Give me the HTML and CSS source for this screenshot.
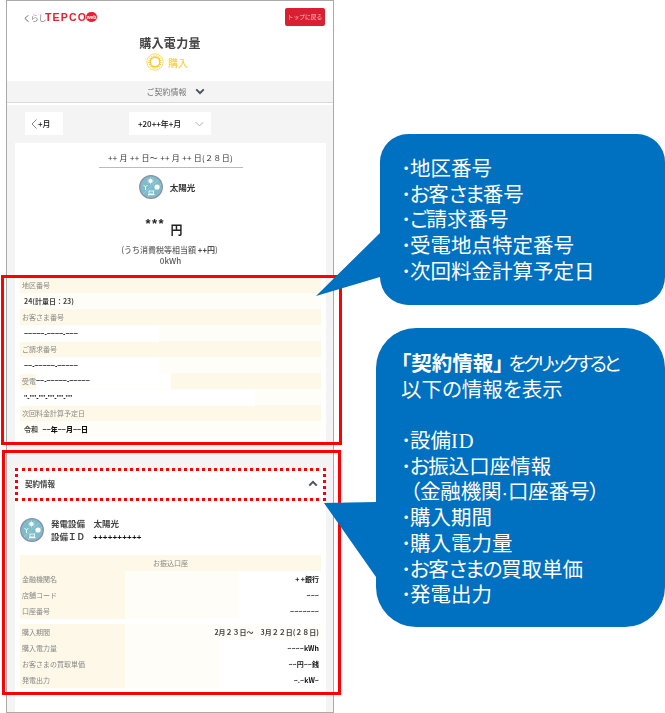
FILE: index.html
```html
<!DOCTYPE html>
<html lang="ja">
<head>
<meta charset="utf-8">
<title>購入電力量</title>
<link rel="stylesheet" href="styles.css">
</head>
<body>
<div class="stage">
  <div class="phone">
    <header class="head">
      <div class="topbar">
        <div class="logo"><span class="logo-k">くらし</span><span class="logo-t">TEPCO</span><span class="logo-w">web</span></div>
        <button class="top-btn">トップに戻る</button>
      </div>
      <h1 class="title">購入電力量</h1>
      <div class="kind">
        <svg class="sun" viewBox="0 0 18 18"><circle cx="9" cy="9" r="8.2" fill="none" stroke="#fbd75b" stroke-width=".9"/><circle cx="9" cy="9" r="4.8" fill="none" stroke="#f9c92e" stroke-width="1.5"/><circle cx="9" cy="9" r="6.1" fill="none" stroke="#f9c92e" stroke-width="1.2" stroke-dasharray="1 1.2"/></svg>
        <span>購入</span>
      </div>
    </header>
    <div class="infobar"><span>ご契約情報</span><svg class="chev" viewBox="0 0 12 8"><path d="M1.5 1.5 6 6l4.5-4.5" fill="none" stroke="#4a5160" stroke-width="2.4"/></svg></div>
    <div class="gap"></div>
    <main class="main">
      <div class="selectors">
        <div class="sel sel-prev"><svg class="lt" viewBox="0 0 6 10"><path d="M5.5.5 1 5l4.5 4.5" fill="none" stroke="#777" stroke-width=".9"/></svg><b>+月</b></div>
        <div class="sel sel-month"><b>+20++年+月</b><svg class="down" viewBox="0 0 12 7"><path d="M1 1l5 5 5-5" fill="none" stroke="#9a9a9a" stroke-width="1"/></svg></div>
      </div>
      <section class="card card-a">
        <div class="period">++ 月 ++ 日〜 ++ 月 ++ 日(２８日)</div>
        <div class="kindrow">
          <svg class="solar" viewBox="0 0 24 24"><use href="#solar-icon"/></svg>
          <b>太陽光</b>
        </div>
        <div class="amount"><span class="stars">***</span><span class="yen">円</span></div>
        <div class="tax">(うち消費税等相当額 <b>++円</b>)</div>
        <div class="kwh">0kWh</div>
        <dl class="rows">
          <dt>地区番号</dt><dd class="strong">24(計量日：23)</dd>
          <dt>お客さま番号</dt><dd><span class="mask w-a">~~~~~-~~~~-~~~</span></dd>
          <dt>ご請求番号</dt><dd><span class="mask w-a">~~-~~~~~-~~~~~</span></dd>
          <dt class="cut">受電<span class="mask w-b">~~-~~~~~-~~~~~</span></dt><dd><span class="mask w-c">''-''''-''''-''''-''''-''''</span></dd>
          <dt>次回料金計算予定日</dt><dd class="strong">令和 <b class="spaced">~~年~~月~~日</b></dd>
        </dl>
      </section>
      <section class="card card-b">
        <div class="accordion"><b>契約情報</b><svg class="chev up" viewBox="0 0 12 8"><path d="M1.5 6.5 6 2l4.5 4.5" fill="none" stroke="#4a5160" stroke-width="2.4"/></svg></div>
        <div class="equip">
          <svg class="solar" viewBox="0 0 24 24"><use href="#solar-icon"/></svg>
          <div class="equip-text">
            <div>発電設備　太陽光</div>
            <div>設備ＩＤ<span class="plus">++++++++++</span></div>
          </div>
        </div>
        <div class="tbl tbl-first">
          <div class="tbl-head">お振込口座</div>
          <div class="tr"><span>金融機関名</span><b>+ +銀行</b></div>
          <div class="tr"><span>店舗コード</span><b>~~~</b></div>
          <div class="tr"><span>口座番号</span><b>~~~~~~~</b></div>
        </div>
        <div class="tbl tbl-second">
          <div class="tr"><span>購入期間</span><b class="grey">2月２３日〜　3月２２日(２８日)</b></div>
          <div class="tr"><span>購入電力量</span><b>~~~~kWh</b></div>
          <div class="tr"><span>お客さまの買取単価</span><b>~~円~~銭</b></div>
          <div class="tr"><span>発電出力</span><b>~.~kW~</b></div>
        </div>
      </section>
    </main>
  </div>

  <svg class="defs" width="0" height="0">
    <symbol id="solar-icon" viewBox="0 0 24 24">
      <circle cx="12" cy="12" r="11.3" fill="#7dbccb" stroke="#8d90a3" stroke-width="1.3"/>
      <path d="M4 19 19 5M8 22 22 9" stroke="#a5d3dd" stroke-width=".7"/>
      <circle cx="11.5" cy="6" r="2" fill="#fff"/>
      <path d="M11.5 2.5v7M8 6h7M9 3.5l5 5M14 3.5l-5 5" stroke="#fff" stroke-width=".5"/>
      <circle cx="18" cy="12" r="2.6" fill="#fff"/>
      <path d="M4.5 10 6.5 12 8.5 10M6.5 12v3" fill="none" stroke="#fff" stroke-width=".9"/>
      <rect x="10" y="16" width="4.5" height="3" fill="none" stroke="#fff" stroke-width=".8"/>
      <rect x="9" y="19" width="6.5" height="1.2" fill="#fff"/>
    </symbol>
  </svg>

  <div class="redbox box-a"></div>
  <div class="redbox box-b"></div>
  <div class="dotbox"></div>

  <svg class="bubbles" viewBox="0 0 665 713">
    <path fill="#0070c0" d="M408 134H637a28 28 0 0 1 28 28V277a28 28 0 0 1-28 28H408a28 28 0 0 1-28-28V277L316 296 380 233V162a28 28 0 0 1 28-28Z"/>
    <path fill="#0070c0" d="M416 328H625a40 40 0 0 1 40 40V587a40 40 0 0 1-40 40H416a40 40 0 0 1-40-40V577L324 503 376 502V368a40 40 0 0 1 40-40Z"/>
  </svg>
  <div class="bubble-text bt-a">
    <div><span class="dot">･</span>地区番号</div>
    <div><span class="dot">･</span><span class="k">お</span>客<span class="k">さま</span>番号</div>
    <div><span class="dot">･</span><span class="k">ご</span>請求番号</div>
    <div><span class="dot">･</span>受電地点特定番号</div>
    <div><span class="dot">･</span>次回料金計算予定日</div>
  </div>
  <div class="bubble-text bt-b">
    <div><b>「契約情報」</b><span class="kk">をクリックすると</span></div>
    <div>以下の情報を表示</div>
    <div>&nbsp;</div>
    <div><span class="dot">･</span>設備<span class="latin">ID</span></div>
    <div><span class="dot">･</span><span class="k">お</span>振込口座情報</div>
    <div class="indent">（金融機関<span class="mid">･</span>口座番号）</div>
    <div><span class="dot">･</span>購入期間</div>
    <div><span class="dot">･</span>購入電力量</div>
    <div><span class="dot">･</span><span class="k">お</span>客<span class="k">さまの</span>買取単価</div>
    <div><span class="dot">･</span>発電出力</div>
  </div>
</div>
</body>
</html>
```

FILE: styles.css
```css
* { box-sizing: border-box; }
html, body { margin: 0; padding: 0; background: #fff; }
body { font-family: "Noto Sans CJK JP", "Liberation Sans", sans-serif; color: #444; }
.stage { position: relative; width: 665px; height: 713px; overflow: hidden; }
.phone { margin-left: 6px; width: 328px; height: 713px; border: 1px solid #aaa; display: flex; flex-direction: column; background: #fff; filter: blur(.3px); }

.head { height: 80px; background: #fff; }
.topbar { display: flex; justify-content: space-between; padding: 7px 8px 0 16px; height: 25px; }
.logo { display: flex; align-items: center; height: 18px; }
.logo-k { font-size: 8px; color: #777; width: 22px; flex: none; letter-spacing: -.2px; white-space: nowrap; }
.logo-t { font-family: "Liberation Sans", sans-serif; font-size: 10.5px; font-weight: 700; color: #e8202f; letter-spacing: 1.2px; width: 41px; flex: none; }
.logo-w { width: 11px; height: 10px; flex: none; border-radius: 5px; background: #e8202f; color: #fff; font: 700 5px/10px "Liberation Sans", sans-serif; text-align: center; }
.top-btn { width: 40px; height: 18px; padding: 0; border: 0; border-radius: 2px; background: #d92032; color: #f6c6cb; font: 5.8px/18px "Noto Sans CJK JP", sans-serif; white-space: nowrap; }
.title { margin: 8px 0 0; font-size: 12px; line-height: 18px; font-weight: 700; text-align: center; color: #444; letter-spacing: .3px; }
.kind { display: flex; align-items: center; justify-content: center; gap: 4px; height: 20px; padding-right: 6px; color: #fbd040; font-size: 10px; font-weight: 500; }
.sun { width: 18px; height: 18px; }

.infobar { height: 22px; background: #f4f4f4; border-bottom: 1px solid #d9d9e2; display: flex; align-items: center; justify-content: center; gap: 8px; padding-left: 11px; font-size: 8px; color: #777; }
.chev { width: 10px; height: 7px; }
.gap { height: 2px; background: #fff; }

.main { flex: 1; background: #f4f4f4; padding: 7px 7px 0 8px; display: flex; flex-direction: column; min-height: 0; }
.selectors { display: flex; gap: 66px; margin-left: 10px; height: 23px; }
.sel { background: #fff; height: 23px; display: flex; align-items: center; font-size: 8px; color: #111; }
.sel-prev { width: 38px; padding-left: 6px; gap: 1px; }
.lt { width: 6px; height: 10px; flex: none; }
.sel-month { width: 82px; padding-left: 9px; justify-content: space-between; padding-right: 7px; }
.sel b { font-weight: 500; white-space: nowrap; }
.down { width: 9px; height: 6px; }

.card { background: #fff; padding: 0 5px; }
.card-a { margin-top: 8px; height: 302px; }
.period { margin: 8px auto 0; width: 144px; height: 17px; border-bottom: 1px solid #bbb; text-align: center; font-size: 8px; line-height: 14px; color: #333; white-space: nowrap; letter-spacing: .3px; }
.kindrow { display: flex; align-items: center; justify-content: center; gap: 7px; margin-top: 7px; height: 24px; padding-right: 7px; font-size: 8.5px; color: #333; }
.solar { width: 24px; height: 24px; flex: none; }
.amount { margin-top: 17px; height: 22px; display: flex; justify-content: center; color: #222; padding-right: 13px; }
.stars { font: 700 13px/14px "Liberation Sans", sans-serif; width: 22px; white-space: nowrap; letter-spacing: 1.5px; margin-top: 1px; }
.yen { font-size: 12px; font-weight: 700; line-height: 16px; margin-top: 6px; margin-left: 3px; }
.tax { margin-top: 6px; font-size: 8px; line-height: 11px; text-align: center; font-weight: 500; color: #666; white-space: nowrap; padding-right: 2px; }
.tax b { color: #222; font-weight: 500; }
.kwh { font-size: 8px; line-height: 11px; text-align: center; color: #555; font-weight: 500; }

.rows { margin: 11px 0 0; }
.rows dt, .rows dd { height: 16px; margin: 0; line-height: 16px; font-size: 7px; white-space: nowrap; }
.rows dt { background: #fdf8e8; color: #888; padding-left: 2px; display: flex; }
.rows dd { background: #fffdf8; padding-left: 4px; color: #111; }
.rows dd.strong { font-weight: 700; color: #444; }
.mask { display: inline-block; background: #fff; font: 700 7px/16px "Liberation Sans", sans-serif; color: #111; }
.w-a { width: 139px; margin-left: -4px; padding-left: 4px; }
.w-b { width: 135px; padding-left: 0; }
.w-c { width: 235px; margin-left: -4px; padding-left: 4px; }
.spaced { color: #111; margin-left: 3px; font-family: "Liberation Sans", "Noto Sans CJK JP", sans-serif; }

.card-b { margin-top: 23px; flex: 1; }
.accordion { height: 32px; margin: 0 -5px; padding: 0 8px 2px 10px; display: flex; align-items: center; justify-content: space-between; font-size: 7.5px; color: #444; }
.accordion b { font-weight: 700; }
.equip { display: flex; align-items: center; gap: 7px; margin-top: 18px; height: 24px; }
.equip-text { font-size: 8.5px; font-weight: 700; line-height: 13px; color: #444; white-space: nowrap; }
.plus { color: #111; font: 700 8px "Liberation Sans", sans-serif; letter-spacing: .2px; margin-left: 8px; }
.tbl { margin-top: 5px; }
.tbl-first { margin-top: 13px; }
.tbl-head { height: 16px; background: #fdf8e8; color: #888; font-size: 7px; line-height: 16px; text-align: center; }
.tr { height: 16px; display: flex; justify-content: space-between; background: #fffdf8; font-size: 7px; line-height: 16px; }
.tr span { width: 105px; background: #fdf8e8; color: #888; padding-left: 2px; }
.tr b { background: #fff; padding-right: 2px; color: #111; font-weight: 700; white-space: nowrap; text-align: right; }
.tbl-first .tr b { width: 82px; }
.tbl-second .tr b { width: 100px; }
.tr b.grey { color: #444; width: 180px; background: #fffdf8; }

.defs { position: absolute; }
.redbox { position: absolute; border: 3px solid #f00; }
.box-a { left: 1px; top: 275px; width: 341px; height: 170px; }
.box-b { left: 2px; top: 450px; width: 339px; height: 245px; }
.dotbox { position: absolute; left: 15px; top: 468px; width: 311px; height: 33px; border: 3px dotted #f00; }
.bubbles { position: absolute; left: 0; top: 0; width: 665px; height: 713px; }
.bubble-text { position: absolute; color: #fff; font-size: 20.5px; line-height: 25.7px; font-feature-settings: "palt"; white-space: nowrap; font-weight: 400; }
.bubble-text div { height: 25.7px; }
.bubble-text b { font-weight: 700; }
.bt-a { left: 401px; top: 155px; }
.bt-b { left: 401px; top: 350px; }
.dot { display: inline-block; width: 9px; }
.k { letter-spacing: -1.5px; }
.kk { letter-spacing: -3px; margin-left: 5px; font-size: 19px; }
.latin { font-family: "Liberation Serif", serif; letter-spacing: 1px; }
.mid { font-size: 14px; }
.indent { padding-left: 9px; letter-spacing: -.2px; }
```
